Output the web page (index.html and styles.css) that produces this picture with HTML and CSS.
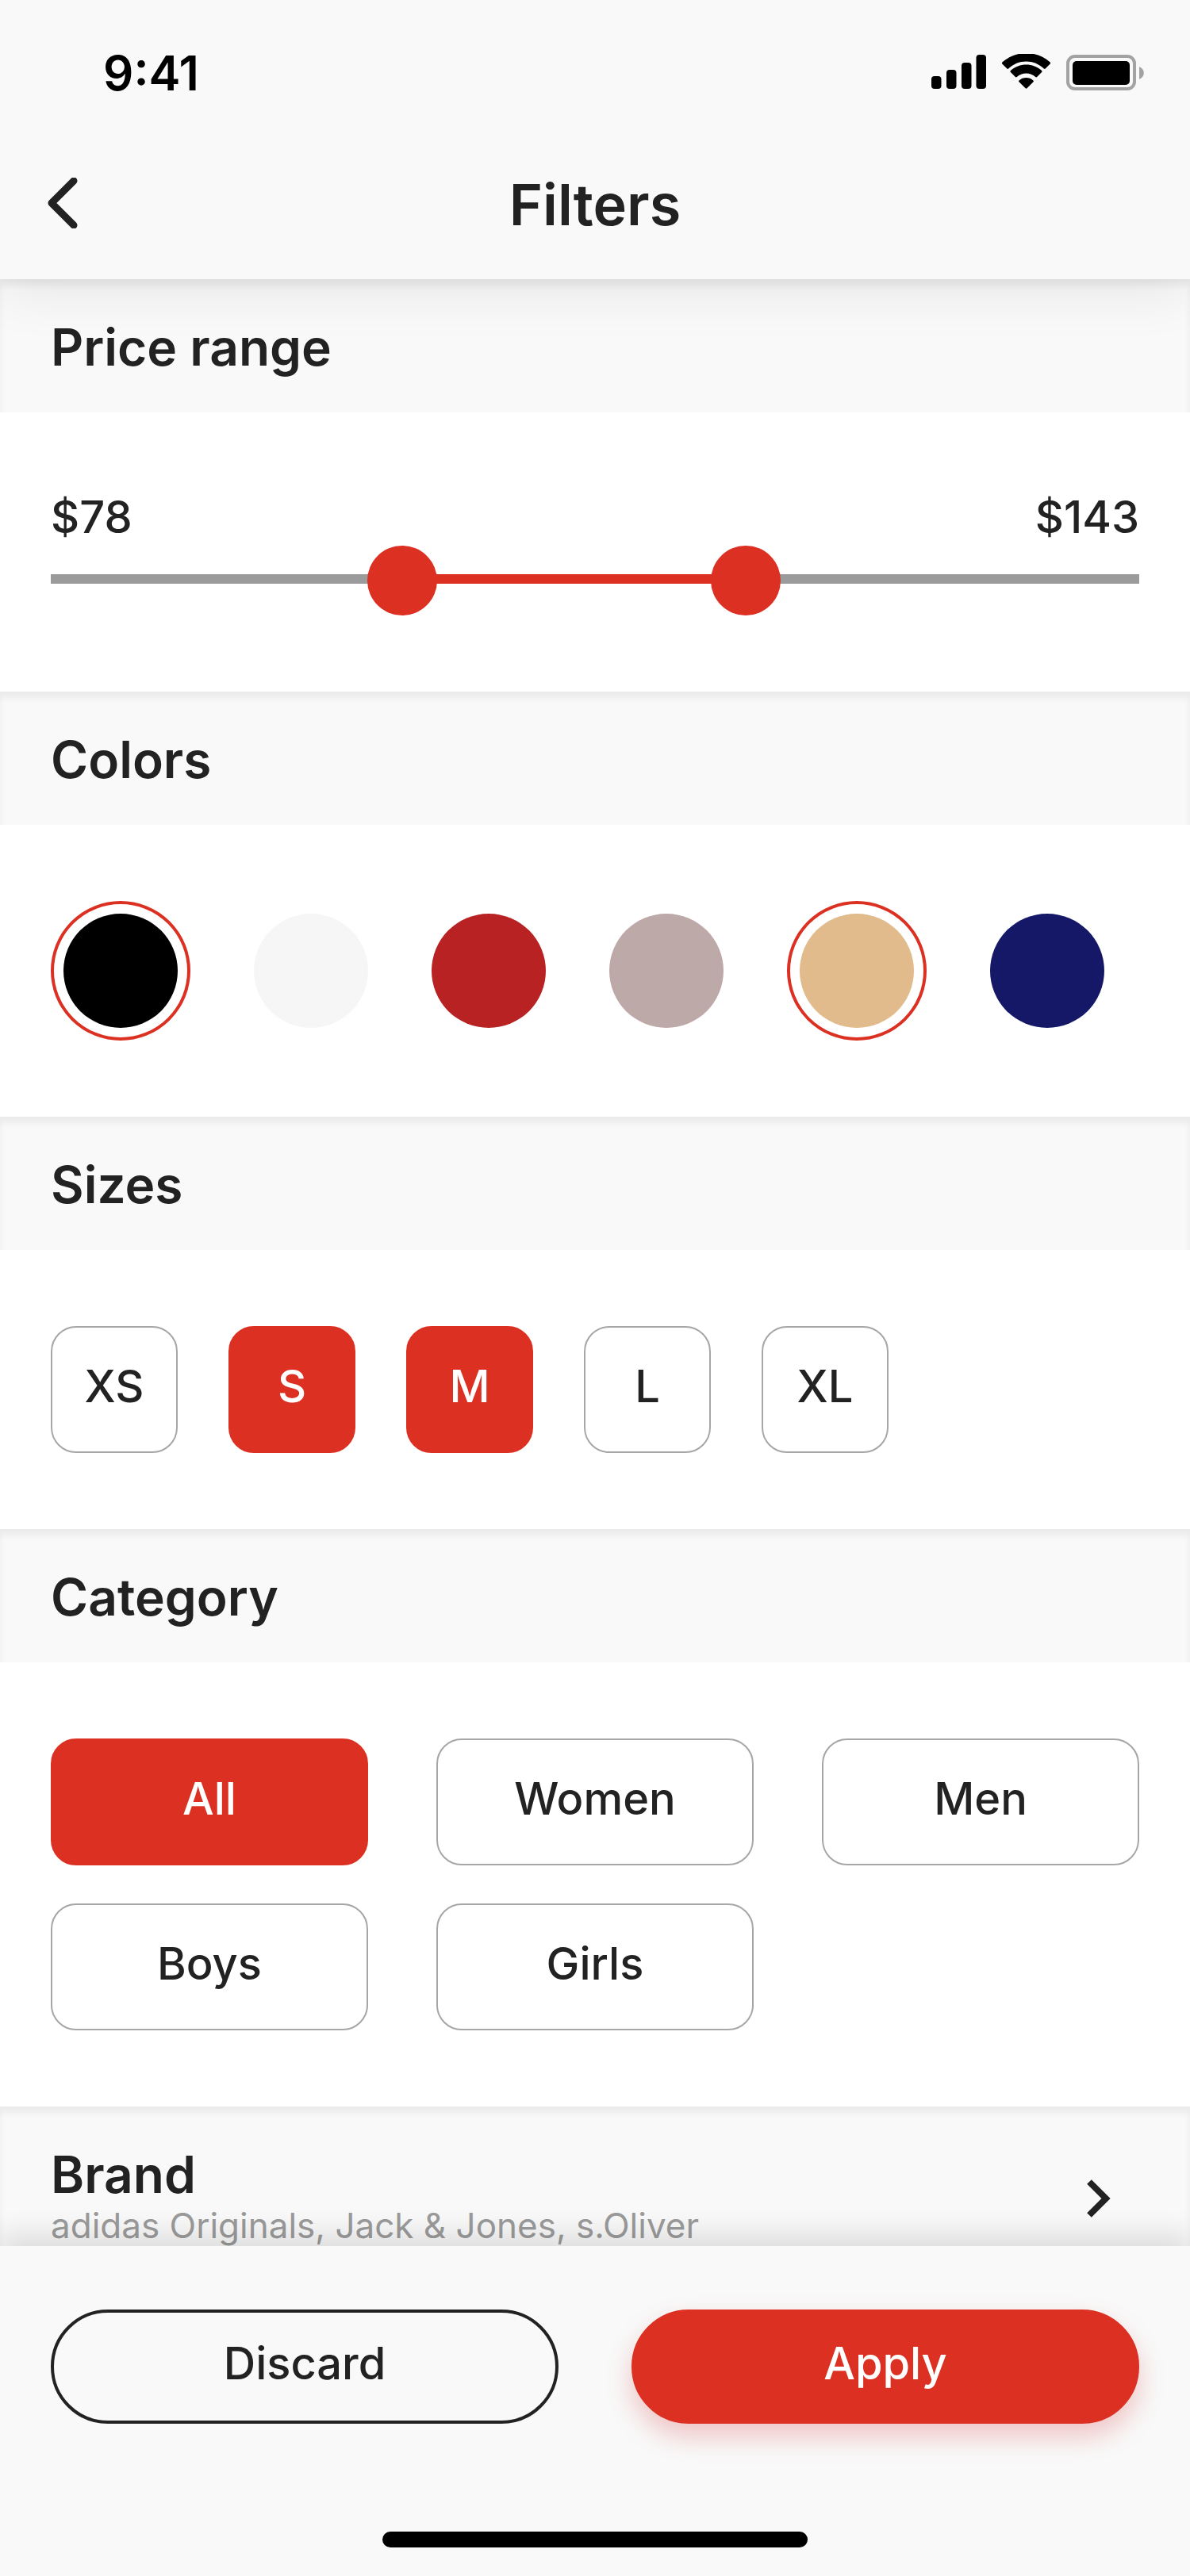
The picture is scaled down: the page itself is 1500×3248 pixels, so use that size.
FILE: index.html
```html
<!DOCTYPE html>
<html lang="en">
<head>
  <meta charset="utf-8">
  <meta name="viewport" content="width=device-width, initial-scale=1">
  <title>Filters</title>
  <link rel="stylesheet" href="styles.css">
</head>
<body>
  <div class="app">
    <header class="app-header">
      <div class="status-bar">
        <time class="clock">9:41</time>
        <div class="status-icons">
          <svg class="status-icon" width="70" height="48" viewBox="0 0 70 48" aria-hidden="true">
            <rect x="0" y="28" width="12.500" height="16" rx="4"/>
            <rect x="19" y="20" width="12.500" height="24" rx="4"/>
            <rect x="38" y="11" width="12.500" height="33" rx="4"/>
            <rect x="56.500" y="1" width="12.500" height="43" rx="4"/>
          </svg>
          <svg class="status-icon" width="62" height="48" viewBox="0 0 62 48" aria-hidden="true">
            <path d="M30.500 9.500c8.500 0 16.300 3.300 22.300 9 .6.600 1.300.6 1.900 0l6-6c.6-.6.600-1.300 0-1.900-17-15.500-43.400-15.500-60.400 0-.6.600-.6 1.300 0 1.900l6 6c.6.600 1.300.6 1.900 0 6-5.700 13.800-9 22.300-9z"/>
            <path d="M30.500 24.500c4.500 0 8.500 1.600 11.700 4.500.6.600 1.300.6 1.900 0l6-6c.6-.6.600-1.300 0-1.900-11-10.200-28.200-10.200-39.200 0-.6.600-.6 1.300 0 1.900l6 6c.6.600 1.300.6 1.900 0 3.200-2.900 7.200-4.500 11.700-4.500z"/>
            <path d="M39.500 35.200c.6-.6.500-1.300 0-1.800-5-4.600-13-4.600-18 0-.5.500-.6 1.200 0 1.800l8.100 8.100c.6.600 1.300.6 1.900 0z"/>
          </svg>
          <svg class="status-icon" width="98" height="48" viewBox="0 0 98 48" aria-hidden="true">
            <rect x="2" y="3" width="84" height="41" rx="9" fill="none" stroke="#a3a3a3" stroke-width="4"/>
            <rect x="8" y="9" width="72" height="30" rx="5"/>
            <path d="M92 16v16c3.500-1.500 5.800-4.500 5.800-8s-2.300-6.500-5.800-8z" fill="#a3a3a3"/>
          </svg>
        </div>
      </div>
      <nav class="nav-bar">
        <button class="back" type="button" aria-label="Back">
          <svg width="40" height="64" viewBox="0 0 40 64" aria-hidden="true">
            <path d="M33 4 5 32l28 28" fill="none" stroke="#222" stroke-width="9" stroke-linecap="round" stroke-linejoin="round"/>
          </svg>
        </button>
        <h1 class="title">Filters</h1>
      </nav>
    </header>

    <main class="filters">
      <section>
        <h2 class="section-title">Price range</h2>
        <div class="section-body">
          <div class="price-labels">
            <label for="price-min">$78</label>
            <label for="price-max">$143</label>
          </div>
          <div class="slider">
            <div class="slider-track">
              <div class="slider-fill" style="margin-left: 32%; width: 32%"></div>
            </div>
            <input class="slider-input" id="price-min" type="range" min="18" max="211" value="78">
            <input class="slider-input" id="price-max" type="range" min="18" max="211" value="143">
          </div>
        </div>
      </section>

      <section>
        <h2 class="section-title">Colors</h2>
        <div class="section-body swatches">
          <input class="swatch swatch-black" type="checkbox" aria-label="Black" checked>
          <input class="swatch swatch-white" type="checkbox" aria-label="White">
          <input class="swatch swatch-red" type="checkbox" aria-label="Red">
          <input class="swatch swatch-mauve" type="checkbox" aria-label="Mauve">
          <input class="swatch swatch-sand" type="checkbox" aria-label="Sand" checked>
          <input class="swatch swatch-navy" type="checkbox" aria-label="Navy">
        </div>
      </section>

      <section>
        <h2 class="section-title">Sizes</h2>
        <div class="section-body sizes">
          <button class="chip" type="button" aria-pressed="false">XS</button>
          <button class="chip" type="button" aria-pressed="true">S</button>
          <button class="chip" type="button" aria-pressed="true">M</button>
          <button class="chip" type="button" aria-pressed="false">L</button>
          <button class="chip" type="button" aria-pressed="false">XL</button>
        </div>
      </section>

      <section>
        <h2 class="section-title">Category</h2>
        <div class="section-body categories">
          <button class="chip" type="button" aria-pressed="true">All</button>
          <button class="chip" type="button" aria-pressed="false">Women</button>
          <button class="chip" type="button" aria-pressed="false">Men</button>
          <button class="chip" type="button" aria-pressed="false">Boys</button>
          <button class="chip" type="button" aria-pressed="false">Girls</button>
        </div>
      </section>

      <a class="brand" href="#brand">
        <span class="brand-text">
          <span class="brand-title">Brand</span>
          <span class="brand-list">adidas Originals, Jack &amp; Jones, s.Oliver</span>
        </span>
        <svg class="brand-arrow" width="32" height="48" viewBox="0 0 32 48" aria-hidden="true">
          <path d="M3 3l21 21L3 45" fill="none" stroke="#222" stroke-width="8"/>
        </svg>
      </a>
    </main>

    <footer class="actions">
      <div class="action-buttons">
        <button class="pill pill-outline" type="button">Discard</button>
        <button class="pill pill-primary" type="button">Apply</button>
      </div>
      <div class="home-indicator"></div>
    </footer>
  </div>
</body>
</html>
```
FILE: styles.css
```css
:root {
  --red: #db3022;
  --ink: #222;
  --gray: #9b9b9b;
  --surface: #f9f9f9;
}

* {
  box-sizing: border-box;
}

body {
  margin: 0;
  background: #fff;
  color: var(--ink);
  font-family: Inter, "Liberation Sans", sans-serif;
  font-size: 56px;
  font-weight: 500;
  line-height: 72px;
}

button,
input {
  margin: 0;
  font: inherit;
  color: inherit;
  cursor: pointer;
}

.app {
  display: flex;
  flex-direction: column;
  height: 100vh;
}

/* Header */
.app-header {
  position: relative;
  z-index: 1;
  flex: none;
  background: var(--surface);
  box-shadow: 0 16px 64px rgba(0, 0, 0, 0.08);
}

.status-bar {
  display: flex;
  justify-content: space-between;
  align-items: flex-end;
  height: 160px;
  padding: 0 58px 44px 130px;
}

.clock {
  color: #000;
  font-size: 60px;
  font-weight: 600;
  line-height: 48px;
}

.status-icons {
  display: flex;
  gap: 19px;
}

.status-icon {
  display: block;
  fill: #000;
}

.nav-bar {
  display: grid;
  grid-template-columns: 128px 1fr 128px;
  align-items: center;
  height: 192px;
}

.back {
  display: flex;
  padding: 0 0 0 60px;
  border: 0;
  background: none;
}

.title {
  margin: 0;
  padding-top: 4px;
  font-size: 72px;
  font-weight: 600;
  line-height: 88px;
  text-align: center;
}

/* Sections */
.filters {
  flex: 1;
  min-height: 0;
  overflow-y: auto;
  scrollbar-width: none;
}

.section-title {
  margin: 0;
  padding: 46px 64px 42px;
  background: var(--surface);
  box-shadow: inset 0 8px 8px rgba(0, 0, 0, 0.06);
  font-size: 64px;
  font-weight: 600;
  line-height: 80px;
}

.section-body {
  padding: 96px 64px;
}

/* Price range */
.price-labels {
  display: flex;
  justify-content: space-between;
}

.slider {
  display: grid;
  align-items: center;
}

.slider-track,
.slider-input {
  grid-area: 1 / 1;
}

.slider-track {
  height: 12px;
  margin-bottom: 4px;
  background: var(--gray);
}

.slider-fill {
  height: 100%;
  background: var(--red);
}

.slider-input {
  width: 100%;
  height: 88px;
  appearance: none;
  background: none;
  pointer-events: none;
}

.slider-input::-webkit-slider-thumb {
  width: 88px;
  height: 88px;
  appearance: none;
  border: 0;
  border-radius: 50%;
  background: var(--red);
  pointer-events: auto;
}

/* Colors */
.swatches {
  display: flex;
  flex-wrap: wrap;
  align-items: center;
  gap: 80px;
}

.swatch {
  width: 144px;
  height: 144px;
  appearance: none;
  border-radius: 50%;
}

.swatch:checked {
  width: 176px;
  height: 176px;
  padding: 12px;
  border: 4px solid var(--red);
}

.swatch::before {
  content: "";
  display: block;
  height: 100%;
  border-radius: 50%;
  background: currentColor;
}

.swatch-black { color: #000; }
.swatch-white { color: #f6f6f6; }
.swatch-red { color: #b82222; }
.swatch-mauve { color: #bea9a9; }
.swatch-sand { color: #e2bb8d; }
.swatch-navy { color: #151867; }

/* Sizes and categories */
.sizes {
  display: flex;
  flex-wrap: wrap;
  gap: 64px;
}

.sizes .chip {
  width: 160px;
}

.categories {
  display: grid;
  grid-template-columns: repeat(3, 1fr);
  gap: 48px 86px;
}

.chip {
  height: 160px;
  padding: 0 0 8px;
  border: 2px solid #a6a6a6;
  border-radius: 32px;
  background: #fff;
}

.chip[aria-pressed="true"] {
  border-color: var(--red);
  background: var(--red);
  color: #fff;
}

/* Brand */
.brand {
  display: flex;
  justify-content: space-between;
  align-items: center;
  padding: 46px 98px 42px 64px;
  background: var(--surface);
  box-shadow: inset 0 8px 8px rgba(0, 0, 0, 0.06);
  color: inherit;
  text-decoration: none;
}

.brand-text {
  display: flex;
  flex-direction: column;
}

.brand-title {
  font-size: 64px;
  font-weight: 600;
  line-height: 80px;
}

.brand-list {
  color: var(--gray);
  font-size: 44px;
  font-weight: 400;
  line-height: 48px;
}

.brand-arrow {
  flex: none;
  margin-top: 12px;
}

/* Footer */
.actions {
  position: relative;
  z-index: 1;
  flex: none;
  padding: 80px 64px 36px;
  background: var(--surface);
  box-shadow: 0 -16px 32px rgba(0, 0, 0, 0.11);
}

.action-buttons {
  display: grid;
  grid-template-columns: 1fr 1fr;
  gap: 92px;
}

.pill {
  height: 144px;
  padding: 0 0 8px;
  border: 4px solid var(--ink);
  border-radius: 72px;
  background: none;
}

.pill-primary {
  border-color: var(--red);
  background: var(--red);
  box-shadow: 0 16px 32px rgba(211, 38, 38, 0.25);
  color: #fff;
}

.home-indicator {
  width: 536px;
  height: 20px;
  margin: 136px auto 0;
  border-radius: 10px;
  background: #000;
}
```
